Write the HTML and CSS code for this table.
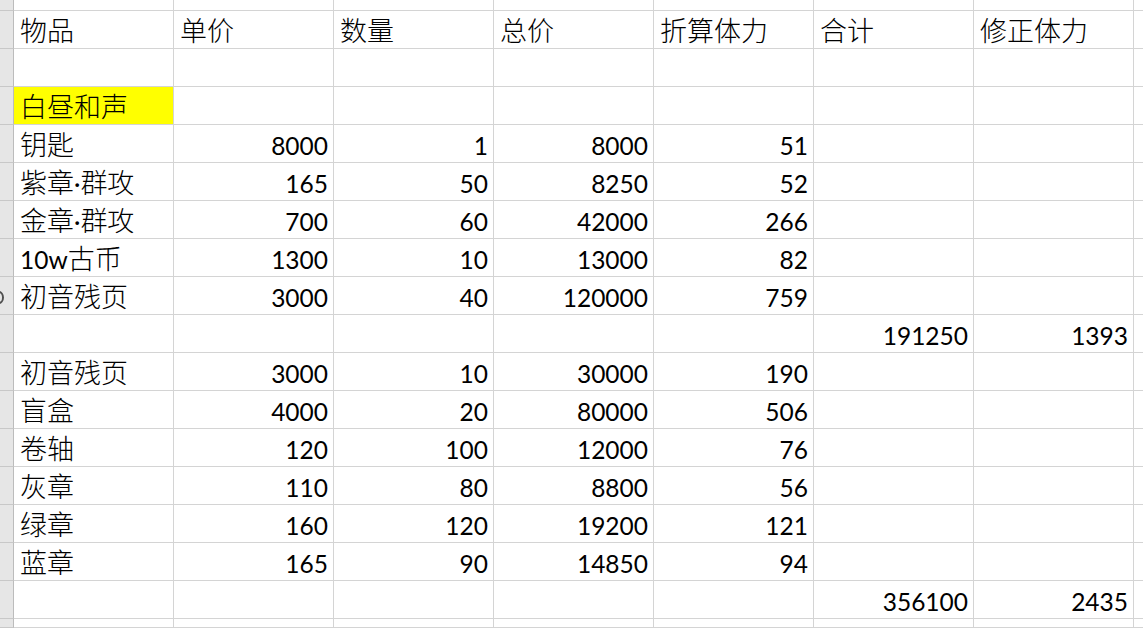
FILE: index.html
```html
<!DOCTYPE html>
<html lang="zh">
<head>
<meta charset="utf-8">
<title>Sheet</title>
<link rel="stylesheet" href="styles.css">
</head>
<body>
<div class="sheet">
  <div class="hd"></div><div class="c"></div><div class="c"></div><div class="c"></div><div class="c"></div><div class="c"></div><div class="c"></div><div class="c"></div><div class="c end"></div>

  <div class="hd"></div><div class="c t">物品</div><div class="c t">单价</div><div class="c t">数量</div><div class="c t">总价</div><div class="c t">折算体力</div><div class="c t">合计</div><div class="c t">修正体力</div><div class="c end"></div>

  <div class="hd"></div><div class="c"></div><div class="c"></div><div class="c"></div><div class="c"></div><div class="c"></div><div class="c"></div><div class="c"></div><div class="c end"></div>

  <div class="hd"></div><div class="c t yellow">白昼和声</div><div class="c"></div><div class="c"></div><div class="c"></div><div class="c"></div><div class="c"></div><div class="c"></div><div class="c end"></div>

  <div class="hd"></div><div class="c t">钥匙</div><div class="c n">8000</div><div class="c n">1</div><div class="c n">8000</div><div class="c n">51</div><div class="c"></div><div class="c"></div><div class="c end"></div>

  <div class="hd"></div><div class="c t">紫章<span class="lat">·</span>群攻</div><div class="c n">165</div><div class="c n">50</div><div class="c n">8250</div><div class="c n">52</div><div class="c"></div><div class="c"></div><div class="c end"></div>

  <div class="hd"></div><div class="c t">金章<span class="lat">·</span>群攻</div><div class="c n">700</div><div class="c n">60</div><div class="c n">42000</div><div class="c n">266</div><div class="c"></div><div class="c"></div><div class="c end"></div>

  <div class="hd"></div><div class="c t"><span class="lat">10w</span>古币</div><div class="c n">1300</div><div class="c n">10</div><div class="c n">13000</div><div class="c n">82</div><div class="c"></div><div class="c"></div><div class="c end"></div>

  <div class="hd"><span class="frag"></span></div><div class="c t">初音残页</div><div class="c n">3000</div><div class="c n">40</div><div class="c n">120000</div><div class="c n">759</div><div class="c"></div><div class="c"></div><div class="c end"></div>

  <div class="hd"></div><div class="c"></div><div class="c"></div><div class="c"></div><div class="c"></div><div class="c"></div><div class="c n">191250</div><div class="c n">1393</div><div class="c end"></div>

  <div class="hd"></div><div class="c t">初音残页</div><div class="c n">3000</div><div class="c n">10</div><div class="c n">30000</div><div class="c n">190</div><div class="c"></div><div class="c"></div><div class="c end"></div>

  <div class="hd"></div><div class="c t">盲盒</div><div class="c n">4000</div><div class="c n">20</div><div class="c n">80000</div><div class="c n">506</div><div class="c"></div><div class="c"></div><div class="c end"></div>

  <div class="hd"></div><div class="c t">卷轴</div><div class="c n">120</div><div class="c n">100</div><div class="c n">12000</div><div class="c n">76</div><div class="c"></div><div class="c"></div><div class="c end"></div>

  <div class="hd"></div><div class="c t">灰章</div><div class="c n">110</div><div class="c n">80</div><div class="c n">8800</div><div class="c n">56</div><div class="c"></div><div class="c"></div><div class="c end"></div>

  <div class="hd"></div><div class="c t">绿章</div><div class="c n">160</div><div class="c n">120</div><div class="c n">19200</div><div class="c n">121</div><div class="c"></div><div class="c"></div><div class="c end"></div>

  <div class="hd"></div><div class="c t">蓝章</div><div class="c n">165</div><div class="c n">90</div><div class="c n">14850</div><div class="c n">94</div><div class="c"></div><div class="c"></div><div class="c end"></div>

  <div class="hd"></div><div class="c"></div><div class="c"></div><div class="c"></div><div class="c"></div><div class="c"></div><div class="c n">356100</div><div class="c n">2435</div><div class="c end"></div>

  <div class="hd"></div><div class="c"></div><div class="c"></div><div class="c"></div><div class="c"></div><div class="c"></div><div class="c"></div><div class="c"></div><div class="c end"></div>
</div>
</body>
</html>
```

FILE: styles.css
```css
html, body {
  margin: 0;
  padding: 0;
  background: #ffffff;
  overflow: hidden;
}

.sheet {
  width: 1143px;
  height: 628px;
  display: grid;
  grid-template-columns: 14px repeat(7, 160px) 1fr;
  grid-template-rows: 11px repeat(16, 38px) 1fr;
  color: #000000;
}

.c {
  box-sizing: border-box;
  border-right: 1px solid #d4d4d4;
  border-bottom: 1px solid #d4d4d4;
  white-space: nowrap;
  overflow: hidden;
  line-height: 37px;
}

.c.end {
  border-right: none;
}

.hd {
  box-sizing: border-box;
  background: #e6e6e6;
  border-right: 1px solid #bcbcbc;
  border-bottom: 1px solid #c8c8c8;
  overflow: hidden;
  position: relative;
}

.frag {
  position: absolute;
  left: -6px;
  top: 14px;
  width: 6px;
  height: 9px;
  border: 2px solid #505050;
  border-radius: 50%;
}

.t {
  font-family: "Noto Sans CJK SC", sans-serif;
  font-weight: 300;
  font-size: 27px;
  padding-left: 6px;
  text-align: left;
}

.lat {
  font-family: Lato, sans-serif;
  font-weight: 400;
  font-size: 24.5px;
}

.n {
  font-family: Lato, "Noto Sans CJK SC", sans-serif;
  font-size: 24.5px;
  text-align: right;
  padding-right: 5px;
  padding-top: 2px;
}

.yellow {
  background: #ffff00;
}
```
